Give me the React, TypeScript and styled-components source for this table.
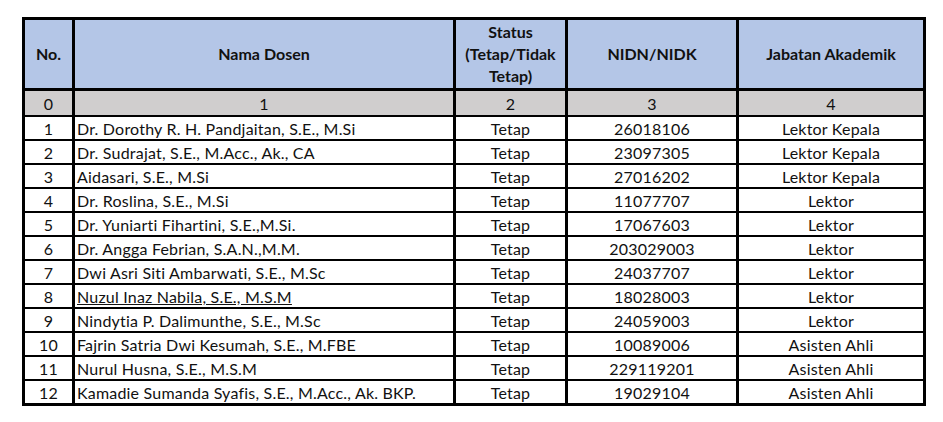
import styled, { createGlobalStyle } from "styled-components";

const GlobalStyle = createGlobalStyle`
  body {
    margin: 0;
    background: #ffffff;
    font-family: "Lato", "Liberation Sans", sans-serif;
    color: #111;
  }
`;

const Page = styled.div`
  padding: 17px 0 0 22px;
`;

const Table = styled.table`
  border-collapse: collapse;
  border: 3px solid #000;
  table-layout: fixed;
  width: 901px;
  font-size: 16px;
  letter-spacing: 0.2px;
`;

const HeadCell = styled.th`
  height: 68px;
  background: #b4c6e7;
  border: 3px solid #000;
  font-weight: 700;
  font-size: 16px;
  letter-spacing: 0;
  line-height: 22px;
  text-align: center;
  padding: 0;
`;

const IndexCell = styled.td`
  background: #d0cece;
  height: 24px;
  border-left: 3px solid #000;
  border-right: 3px solid #000;
  border-bottom: 2px solid #000;
  text-align: center;
  padding: 0;
`;

const Cell = styled.td<{ $left?: boolean; $underline?: boolean }>`
  height: 22px;
  border-left: 3px solid #000;
  border-right: 3px solid #000;
  border-bottom: 2px solid #000;
  text-align: ${(p) => (p.$left ? "left" : "center")};
  padding: 0 ${(p) => (p.$left ? "2px" : "0")};
  white-space: nowrap;
  text-decoration: ${(p) => (p.$underline ? "underline" : "none")};
`;

const widths = [50, 381, 112, 171, 187];

const dosen = [
  ["Dr. Dorothy R. H. Pandjaitan, S.E., M.Si", "26018106", "Lektor Kepala"],
  ["Dr. Sudrajat, S.E., M.Acc., Ak., CA", "23097305", "Lektor Kepala"],
  ["Aidasari, S.E., M.Si", "27016202", "Lektor Kepala"],
  ["Dr. Roslina, S.E., M.Si", "11077707", "Lektor"],
  ["Dr. Yuniarti Fihartini, S.E.,M.Si.", "17067603", "Lektor"],
  ["Dr. Angga Febrian, S.A.N.,M.M.", "203029003", "Lektor"],
  ["Dwi Asri Siti Ambarwati, S.E., M.Sc", "24037707", "Lektor"],
  ["Nuzul Inaz Nabila, S.E., M.S.M", "18028003", "Lektor"],
  ["Nindytia P. Dalimunthe, S.E., M.Sc", "24059003", "Lektor"],
  ["Fajrin Satria Dwi Kesumah, S.E., M.FBE", "10089006", "Asisten Ahli"],
  ["Nurul Husna, S.E., M.S.M", "229119201", "Asisten Ahli"],
  ["Kamadie Sumanda Syafis, S.E., M.Acc., Ak. BKP.", "19029104", "Asisten Ahli"],
];

export default function App() {
  return (
    <Page>
      <GlobalStyle />
      <Table>
        <colgroup>
          {widths.map((w, i) => (
            <col key={i} style={{ width: w }} />
          ))}
        </colgroup>
        <thead>
          <tr>
            <HeadCell>No.</HeadCell>
            <HeadCell>Nama Dosen</HeadCell>
            <HeadCell>
              Status
              <br />
              (Tetap/Tidak
              <br />
              Tetap)
            </HeadCell>
            <HeadCell>NIDN/NIDK</HeadCell>
            <HeadCell>Jabatan Akademik</HeadCell>
          </tr>
        </thead>
        <tbody>
          <tr>
            {[0, 1, 2, 3, 4].map((n) => (
              <IndexCell key={n}>{n}</IndexCell>
            ))}
          </tr>
          {dosen.map(([nama, nidn, jabatan], i) => (
            <tr key={nidn}>
              <Cell>{i + 1}</Cell>
              <Cell $left $underline={i === 7}>
                {nama}
              </Cell>
              <Cell>Tetap</Cell>
              <Cell>{nidn}</Cell>
              <Cell>{jabatan}</Cell>
            </tr>
          ))}
        </tbody>
      </Table>
    </Page>
  );
}
